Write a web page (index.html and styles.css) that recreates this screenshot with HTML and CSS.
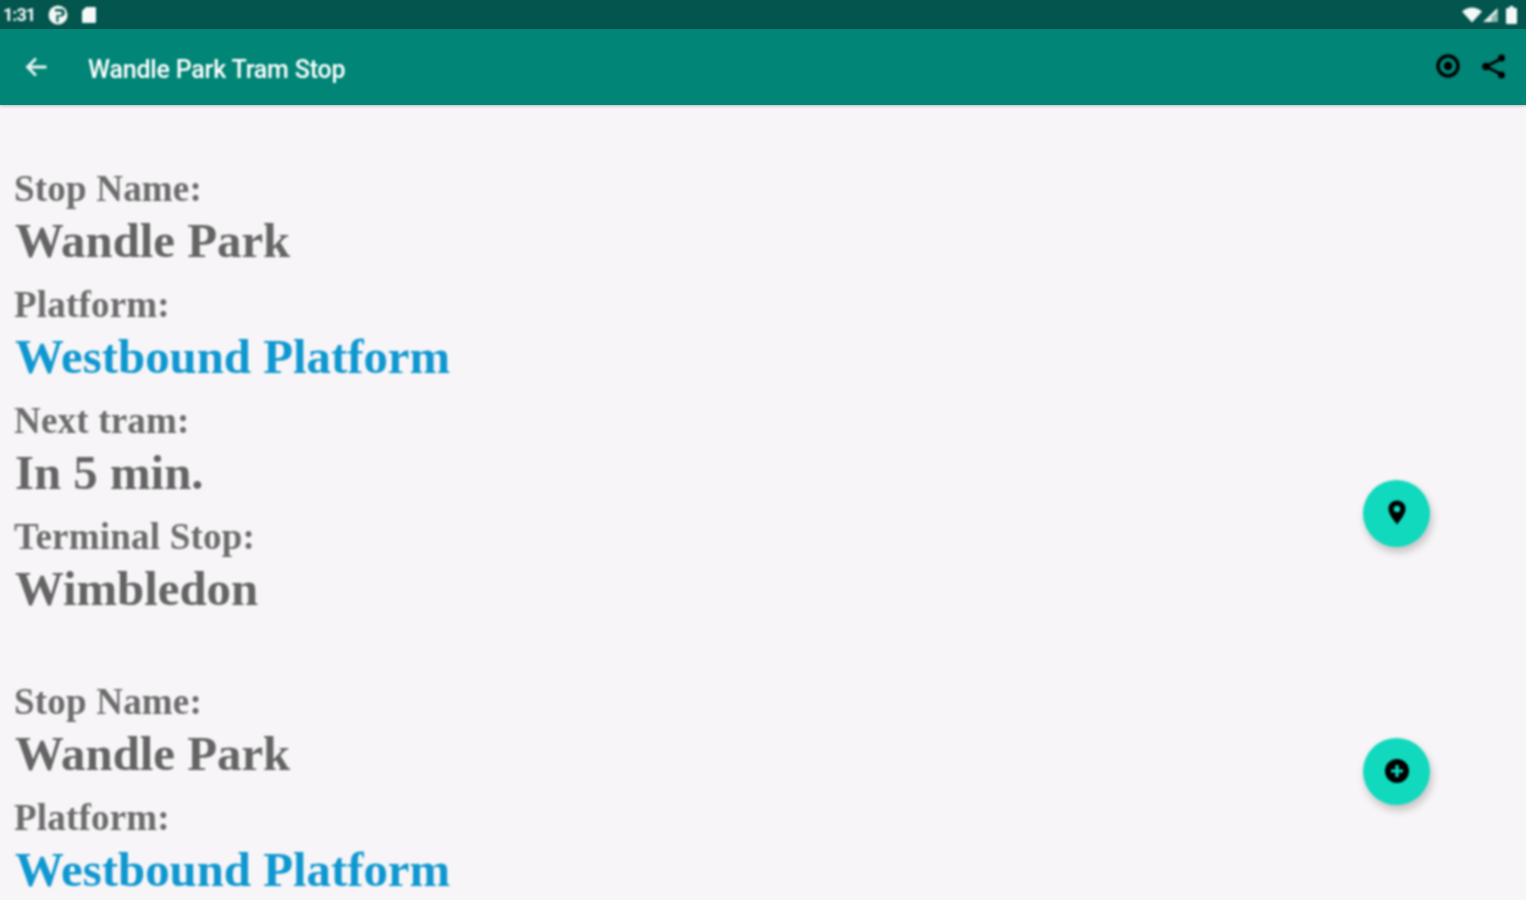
FILE: index.html
```html
<!DOCTYPE html>
<html lang="en">
<head>
<meta charset="utf-8">
<title>Wandle Park Tram Stop</title>
<link rel="stylesheet" href="styles.css">
</head>
<body>
<div class="screen">
  <div class="status-bar">
    <div class="status-left">
      <span class="clock">1:31</span>
      <svg class="st-icon" width="22" height="22" viewBox="0 0 22 22"><circle cx="11" cy="11" r="9.5" fill="#f4f8f7"/><path d="M8 5h6a3.600 3.600 0 0 1 0 7.500h-2.600V18H9.400v-7h3.800a1.300 1.300 0 0 0 0-3.400H8z" fill="#02564e"/></svg>
      <svg class="st-icon" width="16" height="18" viewBox="0 0 16 18"><path d="M5 1h9a1 1 0 0 1 1 1v14a1 1 0 0 1-1 1H2a1 1 0 0 1-1-1V5z" fill="#f4f8f7"/></svg>
    </div>
    <div class="status-right">
      <svg width="20" height="16" viewBox="0 0 20 16"><path d="M0 4.500Q10-3.500 20 4.500L10 15.500z" fill="#f4f8f7"/></svg>
      <svg class="signal" width="16" height="16" viewBox="0 0 16 16"><path d="M15.500 1v14H1z" fill="#e4efec"/><path d="M15.500 5v10H9.500V10z" fill="#8fb3ad"/></svg>
      <svg width="11" height="18" viewBox="0 0 11 18"><path d="M3.500 0h4v2h2.500a1 1 0 0 1 1 1v14a1 1 0 0 1-1 1H1a1 1 0 0 1-1-1V3a1 1 0 0 1 1-1h2.500z" fill="#f4f8f7"/></svg>
    </div>
  </div>
  <header class="app-bar">
    <svg class="back" width="24" height="24" viewBox="0 0 24 24"><path d="M22.500 12H4M12 3.500L3.500 12l8.500 8.500" fill="none" stroke="#eef6f4" stroke-width="2.800"/></svg>
    <h1 class="title">Wandle Park Tram Stop</h1>
    <div class="actions">
      <svg width="26" height="26" viewBox="0 0 26 26"><circle cx="13" cy="13" r="10" fill="none" stroke="#000" stroke-width="3.400"/><circle cx="13" cy="13" r="4.200" fill="#000"/></svg>
      <svg width="26" height="26" viewBox="0 0 26 26"><path d="M20.500 5.500L5 13.500l15.500 8" fill="none" stroke="#000" stroke-width="2.800"/><circle cx="20.500" cy="5" r="3.500" fill="#000"/><circle cx="5" cy="13.500" r="3.800" fill="#000"/><circle cx="20.500" cy="22" r="3.500" fill="#000"/></svg>
    </div>
  </header>
  <main class="content">
    <section class="stop">
      <div class="label">Stop Name:</div><div class="value">Wandle Park</div>
      <div class="label">Platform:</div><div class="value accent">Westbound Platform</div>
      <div class="label">Next tram:</div><div class="value">In 5 min.</div>
      <div class="label">Terminal Stop:</div><div class="value">Wimbledon</div>
    </section>
    <section class="stop">
      <div class="label">Stop Name:</div><div class="value">Wandle Park</div>
      <div class="label">Platform:</div><div class="value accent">Westbound Platform</div>
    </section>
  </main>
  <button class="fab fab-pin" aria-label="Show on map">
    <svg class="pin" width="22" height="28" viewBox="0 0 22 28"><path fill-rule="evenodd" d="M11 1.500c5 0 8.500 3.600 8.500 8.300 0 5-4 9.800-8.500 15.700C6.500 19.600 2.500 14.800 2.500 9.800 2.500 5.100 6 1.500 11 1.500zm0 5.300a3.200 3.200 0 1 0 0 6.400 3.200 3.200 0 0 0 0-6.400z" fill="#000"/></svg>
  </button>
  <button class="fab fab-add" aria-label="Add">
    <svg class="plus" width="26" height="26" viewBox="0 0 26 26"><circle cx="13" cy="13" r="12" fill="#000"/><path d="M13 7v12M7 13h12" stroke="#10d9bd" stroke-width="3.200"/></svg>
  </button>
</div>
</body>
</html>
```
FILE: styles.css
```css
* { box-sizing: border-box; }
html, body { margin: 0; height: 100%; overflow: hidden; }
.screen {
  position: relative;
  width: 1526px;
  height: 900px;
  overflow: hidden;
  background: #f7f5f7;
  font-family: "Liberation Serif", serif;
}
.status-left, .status-right, .back, .title, .actions, .content, .fab { filter: blur(0.9px); }
.status-bar {
  height: 29px;
  background: #02564e;
  color: #f4f8f7;
  display: flex;
  justify-content: space-between;
  align-items: center;
  padding: 0 9px 0 3px;
}
.status-left { display: flex; align-items: center; }
.clock {
  font: 700 18px Roboto, sans-serif;
  letter-spacing: -1px;
  width: 44px;
}
.st-icon { margin-right: 12px; }
.st-icon + .st-icon { margin-right: 0; }
.status-right { display: flex; align-items: center; }
.signal { margin-right: 8px; }
.app-bar {
  height: 76px;
  background: #018577;
  box-shadow: 0 1px 3px rgba(0,0,0,.25);
  display: flex;
  align-items: center;
  padding: 0 13px 1px 24px;
}
.back { flex: none; }
.title {
  margin: 6px 0 0 40px;
  font: 500 25px Roboto, sans-serif;
  color: #fff;
  letter-spacing: -0.2px;
}
.actions { margin: 0 6px 2px auto; display: flex; gap: 20px; align-items: center; }
.content { padding: 59px 0 0 14px; }
.stop { margin-bottom: 49px; }
.label {
  font-size: 37px;
  line-height: 48px;
  padding-top: 1px;
  letter-spacing: 0.2px;
  font-weight: 700;
  color: #6c6c6c;
}
.value {
  font-size: 48.800px;
  line-height: 56px;
  padding: 0 0 11px 1px;
  font-weight: 700;
  color: #646464;
}
.accent { color: #0f97d0; }
.fab {
  position: absolute;
  left: 1363px;
  width: 67px;
  height: 67px;
  border: 0;
  padding: 0;
  border-radius: 50%;
  background: #10d9bd;
  box-shadow: 2px 5px 9px rgba(0,0,0,.22);
  display: flex;
  align-items: center;
  justify-content: center;
}
.pin { margin-bottom: 2px; }
.plus { margin-bottom: 2px; }
.fab-pin { top: 480px; }
.fab-add { top: 738px; }
```
